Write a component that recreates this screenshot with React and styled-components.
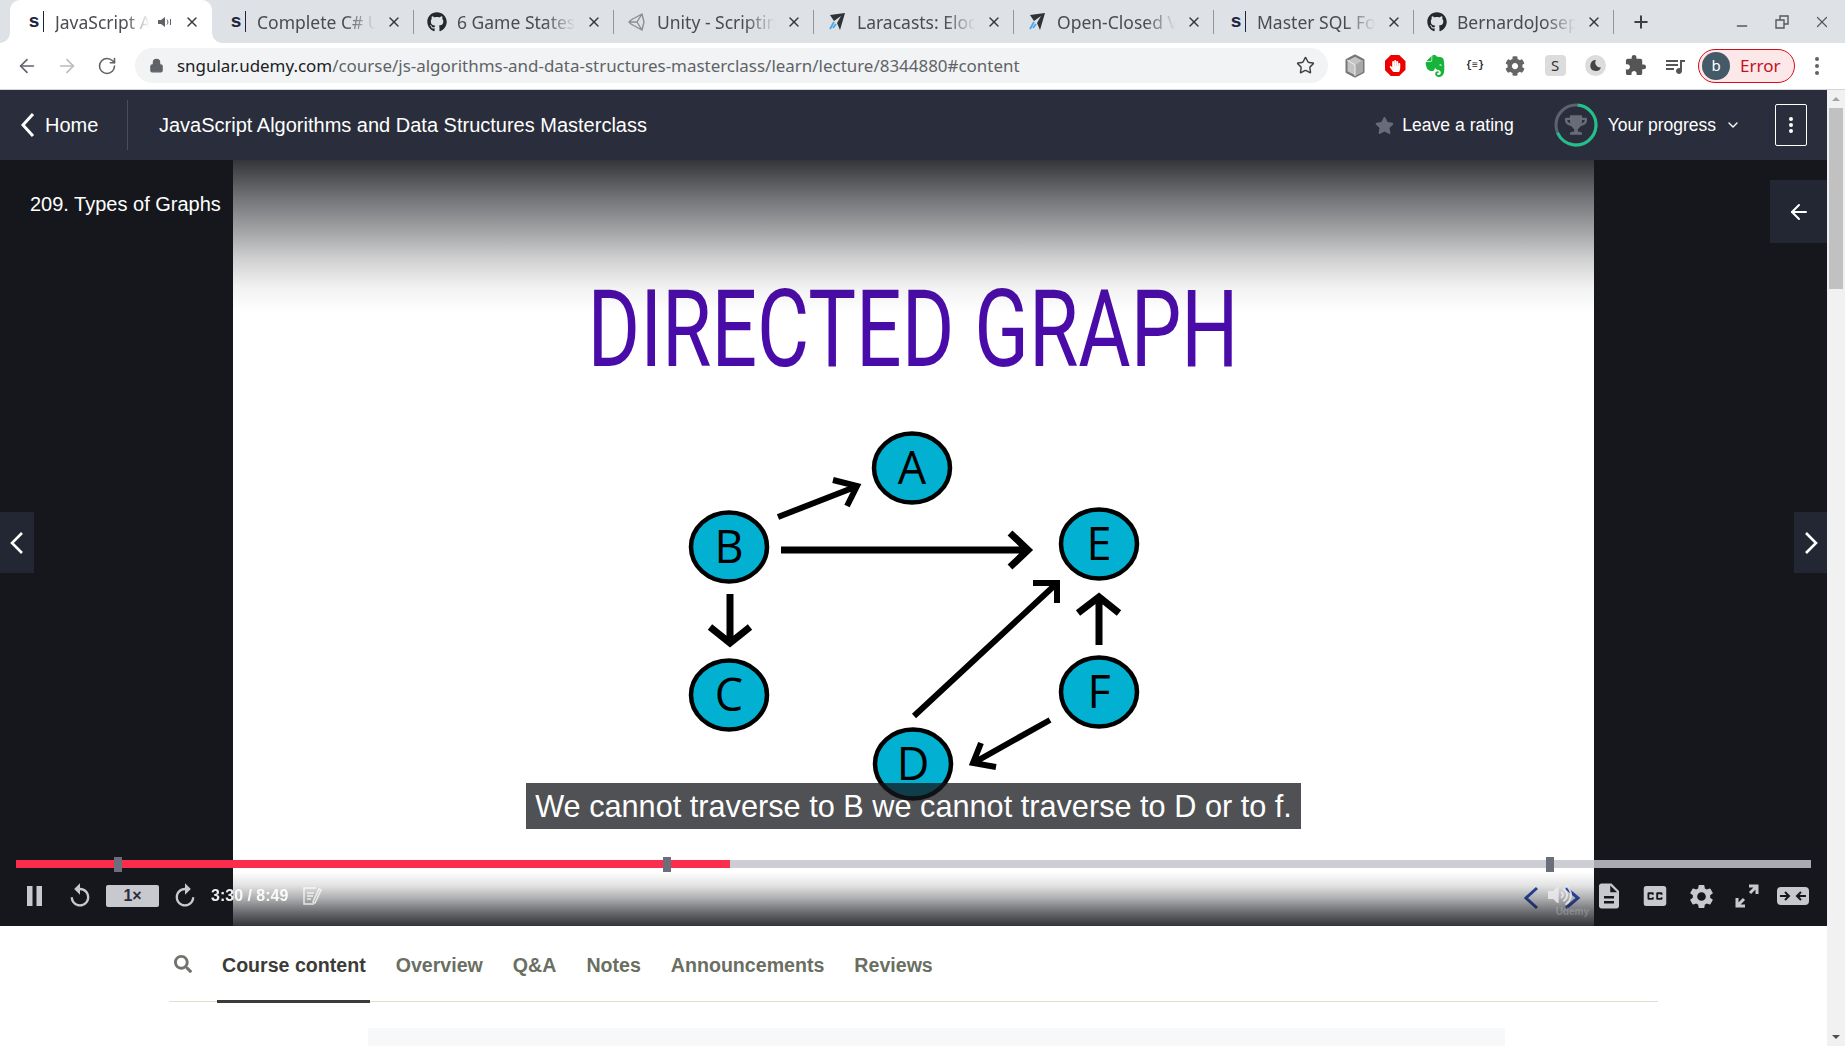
import React from 'react'
import styled, { createGlobalStyle } from 'styled-components'
import { ArrowLeft, ArrowRight, RotateCw, Lock, Star, X, Plus, Minus, ChevronDown } from 'lucide-react'
import { FaGithub, FaStar, FaTrophy, FaHandPaper, FaCog, FaVolumeUp, FaSearch } from 'react-icons/fa'
import { SiEvernote } from 'react-icons/si'
import { MdQueueMusic, MdDescription, MdClosedCaption, MdSettings, MdReplay, MdExtension } from 'react-icons/md'

const Global = createGlobalStyle`
  html, body { margin: 0; padding: 0; height: 100%; overflow: hidden; background: #fff; }
  * { box-sizing: border-box; }
  body { font-family: "Liberation Sans", Arial, sans-serif; }
`

const Page = styled.div`
  width: 1845px;
  height: 1046px;
  display: flex;
  flex-direction: column;
  overflow: hidden;
`

const TabStrip = styled.div`
  height: 43px;
  flex: none;
  display: flex;
  align-items: stretch;
  padding-left: 10px;
  background: #dee1e6;
  font-family: "Noto Sans", sans-serif;
`

const Tab = styled.div`
  position: relative;
  width: ${p => (p.$active ? 202 : 200)}px;
  margin-right: ${p => (p.$active ? 2 : 0)}px;
  display: flex;
  align-items: center;
  padding: 0 12px 0 ${p => (p.$active ? 15 : 13)}px;
  background: ${p => (p.$active ? '#fff' : 'transparent')};
  border-radius: 10px 10px 0 0;

  ${p => !p.$active && `
    &::after {
      content: '';
      position: absolute;
      right: 0;
      top: 10px;
      bottom: 9px;
      width: 1px;
      background: #94969a;
    }
  `}

  ${p => p.$active && `
    &::before, &::after {
      content: '';
      position: absolute;
      bottom: 0;
      width: 10px;
      height: 10px;
    }
    &::before {
      left: -10px;
      background: radial-gradient(circle at 0 0, transparent 9.5px, #fff 10px);
    }
    &::after {
      right: -10px;
      background: radial-gradient(circle at 100% 0, transparent 9.5px, #fff 10px);
    }
  `}
`

const Favicon = styled.span`
  width: 20px;
  margin-right: 10px;
  flex: none;
  display: flex;
  align-items: center;
  justify-content: center;
  color: #24292e;
`

const UdemyMark = styled.span`
  font: 700 19px/20px "Liberation Sans", sans-serif;
  color: #1c2440;
  margin-left: 3px;
  padding-right: 4px;
  border-right: 1.5px solid #1c2440;
  height: 21px;
`

const TabTitle = styled.span`
  flex: 1;
  min-width: 0;
  overflow: hidden;
  white-space: nowrap;
  font-size: 17.5px;
  color: #4a4c50;
  -webkit-mask-image: linear-gradient(90deg, #000 68%, transparent 92%);
  mask-image: linear-gradient(90deg, #000 68%, transparent 92%);
`

const AudioIcon = styled.span`
  flex: none;
  display: flex;
  margin-right: 12px;
  color: #5f6368;
`

const TabClose = styled(X)`
  flex: none;
  color: #35373a;
`

const NewTab = styled.div`
  width: 30px;
  margin-left: 12px;
  display: flex;
  align-items: center;
  justify-content: center;
  color: #3c4043;
`

const WindowButtons = styled.div`
  margin-left: auto;
  padding-right: 3px;
  display: flex;
`

const WindowButton = styled.div`
  width: 40px;
  display: flex;
  align-items: center;
  justify-content: center;
  padding-top: ${p => (p.$low ? 8 : 0)}px;
  color: #55585c;
`

const Toolbar = styled.div`
  height: 47px;
  flex: none;
  display: flex;
  align-items: center;
  padding: 0 6px 1px 7px;
  background: #fff;
  border-bottom: 1px solid #d4d5d7;
`

const NavButton = styled.div`
  width: 40px;
  display: flex;
  justify-content: center;
  color: ${p => (p.$off ? '#b9bbbe' : '#5f6368')};
`

const Omnibox = styled.div`
  flex: 1;
  height: 35px;
  margin: 0 7px 0 8px;
  padding: 0 13px 0 14px;
  display: flex;
  align-items: center;
  background: #f1f3f4;
  border-radius: 18px;
  font-family: "Noto Sans", sans-serif;
  font-size: 16.95px;
  white-space: nowrap;
`

const LockIcon = styled(Lock)`
  flex: none;
  color: #5f6368;
  margin-right: 13px;
`

const UrlHost = styled.span`
  color: #202124;
`

const UrlPath = styled.span`
  color: #5f6368;
`

const BookmarkStar = styled(Star)`
  margin-left: auto;
  color: #3c4043;
`

const ExtSlot = styled.div`
  width: 40px;
  height: 30px;
  flex: none;
  display: flex;
  align-items: center;
  justify-content: center;
  color: ${p => p.$color || '#5f6368'};
`

const StopBadge = styled.div`
  width: 21px;
  height: 21px;
  display: flex;
  align-items: center;
  justify-content: center;
  background: #ee0000;
  color: #fff;
  clip-path: polygon(30% 0, 70% 0, 100% 30%, 100% 70%, 70% 100%, 30% 100%, 0 70%, 0 30%);
`

const BraceIcon = styled.span`
  font: 700 10px "Liberation Mono", monospace;
  color: #2c2c2c;
`

const SBox = styled.div`
  width: 21px;
  height: 21px;
  border-radius: 4px;
  background: #dcdcdc;
  color: #333;
  font: 15px/21px "Noto Sans", sans-serif;
  text-align: center;
`

const MoonBox = styled.div`
  width: 21px;
  height: 21px;
  border-radius: 50%;
  background: #dcdcdc;
  display: flex;
  align-items: center;
  justify-content: center;
`

const ErrorPill = styled.div`
  width: 97px;
  height: 34px;
  margin-left: 3px;
  flex: none;
  display: flex;
  align-items: center;
  padding-left: 3px;
  border: 1.5px solid #d50c1c;
  border-radius: 17px;
  background: #fce8e8;
  font-family: "Noto Sans", sans-serif;
  font-size: 17px;
  color: #c5101d;
`

const Avatar = styled.div`
  width: 28px;
  height: 28px;
  margin-right: 10px;
  border-radius: 50%;
  background: #455a68;
  color: #fff;
  font-size: 15px;
  line-height: 26px;
  text-align: center;
`

const Kebab = styled.div`
  width: 44px;
  display: flex;
  flex-direction: column;
  align-items: center;
  gap: 3px;
`

const KebabDot = styled.span`
  width: 4px;
  height: 4px;
  border-radius: 50%;
  background: ${p => p.$color || '#5f6368'};
`

const Viewport = styled.div`
  flex: 1;
  min-height: 0;
  display: flex;
`

const Main = styled.div`
  flex: 1;
  min-width: 0;
  display: flex;
  flex-direction: column;
`

const Scrollbar = styled.div`
  width: 18px;
  flex: none;
  display: flex;
  flex-direction: column;
  align-items: center;
  padding-top: 7px;
  background: #f1f1f1;
`

const ScrollArrow = styled.span`
  width: 0;
  height: 0;
  border-left: 4px solid transparent;
  border-right: 4px solid transparent;
  ${p => (p.$down ? 'border-top: 4px solid #505050;' : 'border-bottom: 4px solid #a3a3a3;')}
  ${p => p.$down && 'margin-top: auto; margin-bottom: 7px;'}
`

const ScrollThumb = styled.div`
  width: 14px;
  height: 181px;
  margin-top: 7px;
  background: #c1c1c1;
`

const CourseBar = styled.header`
  height: 70px;
  flex: none;
  display: flex;
  align-items: center;
  padding-right: 20px;
  background: #2a2d3b;
  color: #fff;
`

const HomeLink = styled.div`
  width: 128px;
  height: 50px;
  display: flex;
  align-items: center;
  gap: 9px;
  padding-left: 19px;
  font-size: 20px;
  border-right: 1px solid #4a4d5a;
`

const CourseTitle = styled.div`
  margin-left: 31px;
  font-size: 20px;
`

const RatingLink = styled.div`
  margin-left: auto;
  display: flex;
  align-items: center;
  gap: 8px;
  font-size: 17.6px;
  color: #fff;
`

const RatingStar = styled(FaStar)`
  color: #686c79;
`

const Progress = styled.div`
  margin-left: 40px;
  display: flex;
  align-items: center;
  font-size: 17.5px;
`

const Ring = styled.div`
  position: relative;
  width: 44px;
  height: 44px;
  margin-right: 10px;
`

const RingTrophy = styled(FaTrophy)`
  position: absolute;
  left: 11px;
  top: 11px;
  color: #686c79;
`

const ProgressCaret = styled(ChevronDown)`
  margin-left: 9px;
`

const MoreButton = styled.div`
  width: 32px;
  height: 42px;
  margin-left: 34px;
  display: flex;
  flex-direction: column;
  align-items: center;
  justify-content: center;
  gap: 2px;
  border: 1px solid #fff;
  border-radius: 2px;
`

const Player = styled.section`
  position: relative;
  height: 766px;
  flex: none;
  display: grid;
  grid-template-columns: 233px 1361px 233px;
  background: #15171c;
  overflow: hidden;
`

const LectureName = styled.div`
  padding: 33px 0 0 30px;
  font-size: 20px;
  line-height: 23px;
  color: #fff;
  white-space: nowrap;
`

const Slide = styled.div`
  position: relative;
  display: flex;
  flex-direction: column;
  align-items: center;
  background: #fff;
`

const SlideHeading = styled.h1`
  margin: 122px 0 0;
  height: 96px;
  font: 400 107px/96px Roboto, sans-serif;
  color: #4a0ca8;
  white-space: nowrap;
  transform: scaleX(0.75);
`

const Diagram = styled.svg`
  display: block;
  margin-top: 42px;
`

const TopShade = styled.div`
  position: absolute;
  left: 0;
  right: 0;
  top: 0;
  height: 153px;
  background: linear-gradient(
    rgba(21, 23, 28, 0.87),
    rgba(21, 23, 28, 0.6) 25%,
    rgba(21, 23, 28, 0.37) 49%,
    rgba(21, 23, 28, 0.2) 65%,
    rgba(21, 23, 28, 0.06) 83%,
    rgba(21, 23, 28, 0)
  );
`

const BottomShade = styled.div`
  position: absolute;
  left: 0;
  right: 0;
  bottom: 0;
  height: 54px;
  background: linear-gradient(
    rgba(21, 23, 28, 0),
    rgba(21, 23, 28, 0.12) 25%,
    rgba(21, 23, 28, 0.36) 50%,
    rgba(21, 23, 28, 0.64) 75%,
    rgba(21, 23, 28, 0.88)
  );
`

const SlideChevrons = styled.svg`
  position: absolute;
  right: 12px;
  bottom: 16px;
`

const Watermark = styled.div`
  position: absolute;
  right: 5px;
  bottom: 9px;
  font: 700 10px "Liberation Sans", sans-serif;
  color: rgba(255, 255, 255, 0.22);
`

const Caption = styled.div`
  position: absolute;
  left: 526px;
  top: 623px;
  width: 775px;
  height: 46px;
  background: rgba(21, 23, 28, 0.75);
  color: #fff;
  font-size: 30.7px;
  line-height: 47px;
  text-align: center;
  white-space: nowrap;
`

const SideButton = styled.div`
  position: absolute;
  ${p => (p.$left ? 'left: 0;' : 'right: 0;')}
  top: ${p => p.$top}px;
  width: ${p => p.$w}px;
  height: ${p => p.$h}px;
  display: flex;
  align-items: center;
  justify-content: center;
  background: #232733;
  color: #fff;
`

const PlayerChrome = styled.div`
  position: absolute;
  left: 0;
  right: 0;
  bottom: 0;
  height: 69px;
`

const Track = styled.div`
  position: relative;
  height: 8px;
  margin: 3px 16px 0;
  background: rgba(196, 198, 204, 0.85);
`

const Played = styled.div`
  height: 100%;
  background: #fb2d4e;
`

const Marker = styled.span`
  position: absolute;
  top: -3px;
  width: 8px;
  height: 15px;
  background: #6a6f7b;
`

const Controls = styled.div`
  height: 46px;
  margin-top: 5px;
  display: flex;
  align-items: center;
  justify-content: space-between;
  padding: 0 11px 0 27px;
  color: #c7c9ce;
`

const ControlGroup = styled.div`
  display: flex;
  align-items: center;
  gap: ${p => p.$gap}px;
`

const PauseIcon = styled.svg`
  margin-right: 12px;
`

const Flip = styled.div`
  display: flex;
  transform: scaleX(-1);
`

const SpeedBadge = styled.div`
  width: 53px;
  height: 22px;
  border-radius: 2px;
  background: #c7c9ce;
  color: #2a2d3b;
  font-size: 16px;
  font-weight: 700;
  line-height: 22px;
  text-align: center;
`

const TimeText = styled.span`
  font-size: 16px;
  font-weight: 700;
  color: #fff;
  opacity: 0.92;
`

const NoteIcon = styled.svg`
  margin-left: 2px;
  opacity: 0.75;
`

const ChromeSlot = styled.div`
  width: 46px;
  display: flex;
  justify-content: center;
`

const VolumeIcon = styled(FaVolumeUp)`
  position: absolute;
  left: 1548px;
  top: 26px;
  color: rgba(235, 235, 238, 0.85);
`

const LectureNav = styled.nav`
  height: 76px;
  margin: 0 169px;
  flex: none;
  display: flex;
  align-items: center;
  gap: 30px;
  padding-left: 5px;
  border-bottom: 1px solid #dfe0d0;
  font-size: 19.6px;
  font-weight: 700;
`

const SearchIcon = styled(FaSearch)`
  color: #73726c;
`

const NavItem = styled.div`
  position: relative;
  height: 76px;
  line-height: 78px;
  color: ${p => (p.$active ? '#3c3b37' : '#6a6f62')};

  ${p => p.$active && `
    &::after {
      content: '';
      position: absolute;
      left: -5px;
      right: -4px;
      bottom: -1px;
      height: 3px;
      background: #3c3b37;
    }
  `}
`

const ContentPanel = styled.div`
  flex: 1;
  margin: 26px 322px 0 368px;
  background: #f7f8fa;
`

const Plane = () => (
  <svg width="20" height="20" viewBox="0 0 20 20">
    <path d="M3 3l15-2-5 17-3-7 4-7-7 5z" fill="#2f3336" />
    <path d="M7 10l-4 7M9 12l-3 4" stroke="#4aa8e8" strokeWidth="1.8" />
  </svg>
)

const UnityLogo = () => (
  <svg width="20" height="20" viewBox="0 0 20 20" fill="none" stroke="#8b8e92" strokeWidth="1.4">
    <path d="M15 2L4 8l-2 2 2 2 11 6 2-8zM15 2l-5 8 5 8M2 10h8" />
  </svg>
)

const Speaker = () => (
  <svg width="14" height="12" viewBox="0 0 14 12" fill="currentColor">
    <path d="M0 4h3l4-3v10L3 8H0z" />
    <path d="M9 3.500c1.200 1.400 1.200 3.600 0 5" stroke="currentColor" fill="none" />
    <path d="M12 3v6h1V3z" />
  </svg>
)

const tabs = [
  { title: 'JavaScript Algorithms', icon: <UdemyMark>s</UdemyMark>, active: true, audio: true },
  { title: 'Complete C# Unity', icon: <UdemyMark>s</UdemyMark> },
  { title: '6 Game States', icon: <FaGithub size={20} /> },
  { title: 'Unity - Scripting API', icon: <UnityLogo /> },
  { title: 'Laracasts: Eloquent', icon: <Plane /> },
  { title: 'Open-Closed Vs', icon: <Plane /> },
  { title: 'Master SQL For Data', icon: <UdemyMark>s</UdemyMark> },
  { title: 'BernardoJoseph', icon: <FaGithub size={20} /> },
]

const nodes = [
  { id: 'A', x: 912, y: 468 },
  { id: 'B', x: 729, y: 547 },
  { id: 'C', x: 729, y: 695 },
  { id: 'D', x: 913, y: 764 },
  { id: 'E', x: 1099, y: 544 },
  { id: 'F', x: 1099, y: 692 },
]

const arrows = [
  { d: 'M778 517L855 487M833 480L857 486L847 506', w: 6 },
  { d: 'M781 550H1026M1010 533L1028 550L1010 567', w: 7 },
  { d: 'M730 594V641M710 627L730 643L750 627', w: 7 },
  { d: 'M914 716L1055 585M1033 583H1057V603', w: 6 },
  { d: 'M1099 645V599M1078 613L1099 597L1119 613', w: 7 },
  { d: 'M1050 720L975 762M981 743L973 763L996 767', w: 6 },
]

const markers = [98, 647, 1530]
const navItems = ['Overview', 'Q&A', 'Notes', 'Announcements', 'Reviews']

export default function App() {
  return (
    <Page>
      <Global />
      <TabStrip>
        {tabs.map(t => (
          <Tab key={t.title} $active={t.active}>
            <Favicon>{t.icon}</Favicon>
            <TabTitle>{t.title}</TabTitle>
            {t.audio && <AudioIcon><Speaker /></AudioIcon>}
            <TabClose size={16} strokeWidth={2} />
          </Tab>
        ))}
        <NewTab><Plus size={20} strokeWidth={2.4} /></NewTab>
        <WindowButtons>
          <WindowButton $low><Minus size={16} /></WindowButton>
          <WindowButton>
            <svg width="16" height="16" viewBox="0 0 16 16" fill="none" stroke="currentColor" strokeWidth="1.4">
              <path d="M2 6h8v8H2zM6 6V2h8v8h-4" />
            </svg>
          </WindowButton>
          <WindowButton><X size={18} strokeWidth={1.6} /></WindowButton>
        </WindowButtons>
      </TabStrip>

      <Toolbar>
        <NavButton><ArrowLeft size={22} strokeWidth={1.8} /></NavButton>
        <NavButton $off><ArrowRight size={22} strokeWidth={1.8} /></NavButton>
        <NavButton><RotateCw size={20} strokeWidth={1.9} /></NavButton>
        <Omnibox>
          <LockIcon size={15} fill="#5f6368" />
          <UrlHost>sngular.udemy.com</UrlHost>
          <UrlPath>/course/js-algorithms-and-data-structures-masterclass/learn/lecture/8344880#content</UrlPath>
          <BookmarkStar size={19} strokeWidth={1.8} />
        </Omnibox>
        <ExtSlot>
          <svg width="22" height="24" viewBox="0 0 22 24" strokeLinejoin="round">
            <path d="M11 1.500l8.500 4.500v12L11 22.500 2.500 18V6z" fill="#c4c4c4" stroke="#777" strokeWidth="2" />
            <path d="M11 11l8-5v12l-8 4z" fill="#a8a8a8" />
            <path d="M11 11L3 6M11 11v11" stroke="#eee" strokeWidth="1" fill="none" />
          </svg>
        </ExtSlot>
        <ExtSlot><StopBadge><FaHandPaper size={12} /></StopBadge></ExtSlot>
        <ExtSlot $color="#17b33a"><SiEvernote size={22} /></ExtSlot>
        <ExtSlot><BraceIcon>{'{≡}'}</BraceIcon></ExtSlot>
        <ExtSlot $color="#666"><FaCog size={20} /></ExtSlot>
        <ExtSlot><SBox>S</SBox></ExtSlot>
        <ExtSlot>
          <MoonBox>
            <svg width="13" height="13" viewBox="0 0 13 13">
              <path d="M7 1a5.500 5.500 0 1 0 5 7.500A5 5 0 0 1 7 1z" fill="#444" />
            </svg>
          </MoonBox>
        </ExtSlot>
        <ExtSlot $color="#555"><MdExtension size={23} /></ExtSlot>
        <ExtSlot $color="#555"><MdQueueMusic size={24} /></ExtSlot>
        <ErrorPill>
          <Avatar>b</Avatar>
          Error
        </ErrorPill>
        <Kebab><KebabDot /><KebabDot /><KebabDot /></Kebab>
      </Toolbar>

      <Viewport>
        <Main>
          <CourseBar>
            <HomeLink>
              <svg width="17" height="26" viewBox="0 0 17 26" fill="none" stroke="#fff" strokeWidth="3">
                <path d="M14 2L4 13l10 11" />
              </svg>
              Home
            </HomeLink>
            <CourseTitle>JavaScript Algorithms and Data Structures Masterclass</CourseTitle>
            <RatingLink><RatingStar size={19} />Leave a rating</RatingLink>
            <Progress>
              <Ring>
                <svg width="44" height="44" viewBox="0 0 44 44" fill="none" strokeWidth="3">
                  <circle cx="22" cy="22" r="20" stroke="#5e6270" />
                  <circle cx="22" cy="22" r="20" stroke="#1ec28b" strokeDasharray="84 126" transform="rotate(-85 22 22)" />
                </svg>
                <RingTrophy size={22} />
              </Ring>
              Your progress
              <ProgressCaret size={16} />
            </Progress>
            <MoreButton><KebabDot $color="#fff" /><KebabDot $color="#fff" /><KebabDot $color="#fff" /></MoreButton>
          </CourseBar>

          <Player>
            <LectureName>209. Types of Graphs</LectureName>
            <Slide>
              <SlideHeading>DIRECTED GRAPH</SlideHeading>
              <Diagram width="500" height="390" viewBox="664 420 500 390">
                {arrows.map(a => (
                  <path key={a.d} d={a.d} fill="none" stroke="#000" strokeWidth={a.w} />
                ))}
                {nodes.map(n => (
                  <g key={n.id}>
                    <ellipse cx={n.x} cy={n.y} rx="38" ry="34.500" fill="#02b1d2" stroke="#000" strokeWidth="4.500" />
                    <text x={n.x} y={n.y + 16} textAnchor="middle" fontFamily="Open Sans" fontSize="45" fill="#000">{n.id}</text>
                  </g>
                ))}
              </Diagram>
              <SlideChevrons width="60" height="24" viewBox="0 0 60 24" fill="none" strokeWidth="3">
                <path d="M15 2L4 12l11 10" stroke="#2a48ad" />
                <path d="M44 2l12 10-12 10" stroke="#2f4fc0" />
              </SlideChevrons>
              <TopShade />
              <BottomShade />
              <Watermark>Udemy</Watermark>
            </Slide>
            <div />
            <Caption>We cannot traverse to B we cannot traverse to D or to f.</Caption>
            <SideButton $top={20} $w={57} $h={63}><ArrowLeft size={24} strokeWidth={2} /></SideButton>
            <SideButton $left $top={352} $w={34} $h={61}>
              <svg width="14" height="22" viewBox="0 0 14 22" fill="none" stroke="#fff" strokeWidth="2.600"><path d="M12 1L2 11l10 10" /></svg>
            </SideButton>
            <SideButton $top={352} $w={33} $h={61}>
              <svg width="14" height="22" viewBox="0 0 14 22" fill="none" stroke="#fff" strokeWidth="2.600"><path d="M2 1l10 10L2 21" /></svg>
            </SideButton>
            <PlayerChrome>
              <Track>
                <Played style={{ width: '39.8%' }} />
                {markers.map(m => <Marker key={m} style={{ left: m }} />)}
              </Track>
              <VolumeIcon size={24} />
              <Controls>
                <ControlGroup $gap={12}>
                  <PauseIcon width="15" height="20" viewBox="0 0 15 20" fill="currentColor">
                    <path d="M0 0h5.500v20H0zM9.500 0H15v20H9.500z" />
                  </PauseIcon>
                  <MdReplay size={28} />
                  <SpeedBadge>1×</SpeedBadge>
                  <Flip><MdReplay size={28} /></Flip>
                  <TimeText>3:30 / 8:49</TimeText>
                  <NoteIcon width="20" height="20" viewBox="0 0 20 20" fill="none" stroke="#fff" strokeWidth="1.500">
                    <path d="M14 2H2v16h10M5 7h7M5 10h6M5 13h4M17 3l2 1-6 13-2-1z" />
                  </NoteIcon>
                </ControlGroup>
                <ControlGroup $gap={0}>
                  <ChromeSlot><MdDescription size={30} /></ChromeSlot>
                  <ChromeSlot><MdClosedCaption size={30} /></ChromeSlot>
                  <ChromeSlot><MdSettings size={29} /></ChromeSlot>
                  <ChromeSlot>
                    <svg width="26" height="26" viewBox="0 0 26 26" fill="none" stroke="currentColor" strokeWidth="3">
                      <path d="M15 3h8v8M23 3l-7 7M11 23H3v-8M3 23l7-7" />
                    </svg>
                  </ChromeSlot>
                  <ChromeSlot>
                    <svg width="32" height="18" viewBox="0 0 32 18">
                      <rect width="32" height="18" rx="4" fill="currentColor" />
                      <path d="M3 9h9M8 5l4 4-4 4M29 9h-9M24 5l-4 4 4 4" fill="none" stroke="#15171c" strokeWidth="2" />
                    </svg>
                  </ChromeSlot>
                </ControlGroup>
              </Controls>
            </PlayerChrome>
          </Player>

          <LectureNav>
            <SearchIcon size={18} />
            <NavItem $active>Course content</NavItem>
            {navItems.map(n => <NavItem key={n}>{n}</NavItem>)}
          </LectureNav>
          <ContentPanel />
        </Main>
        <Scrollbar>
          <ScrollArrow />
          <ScrollThumb />
          <ScrollArrow $down />
        </Scrollbar>
      </Viewport>
    </Page>
  )
}
